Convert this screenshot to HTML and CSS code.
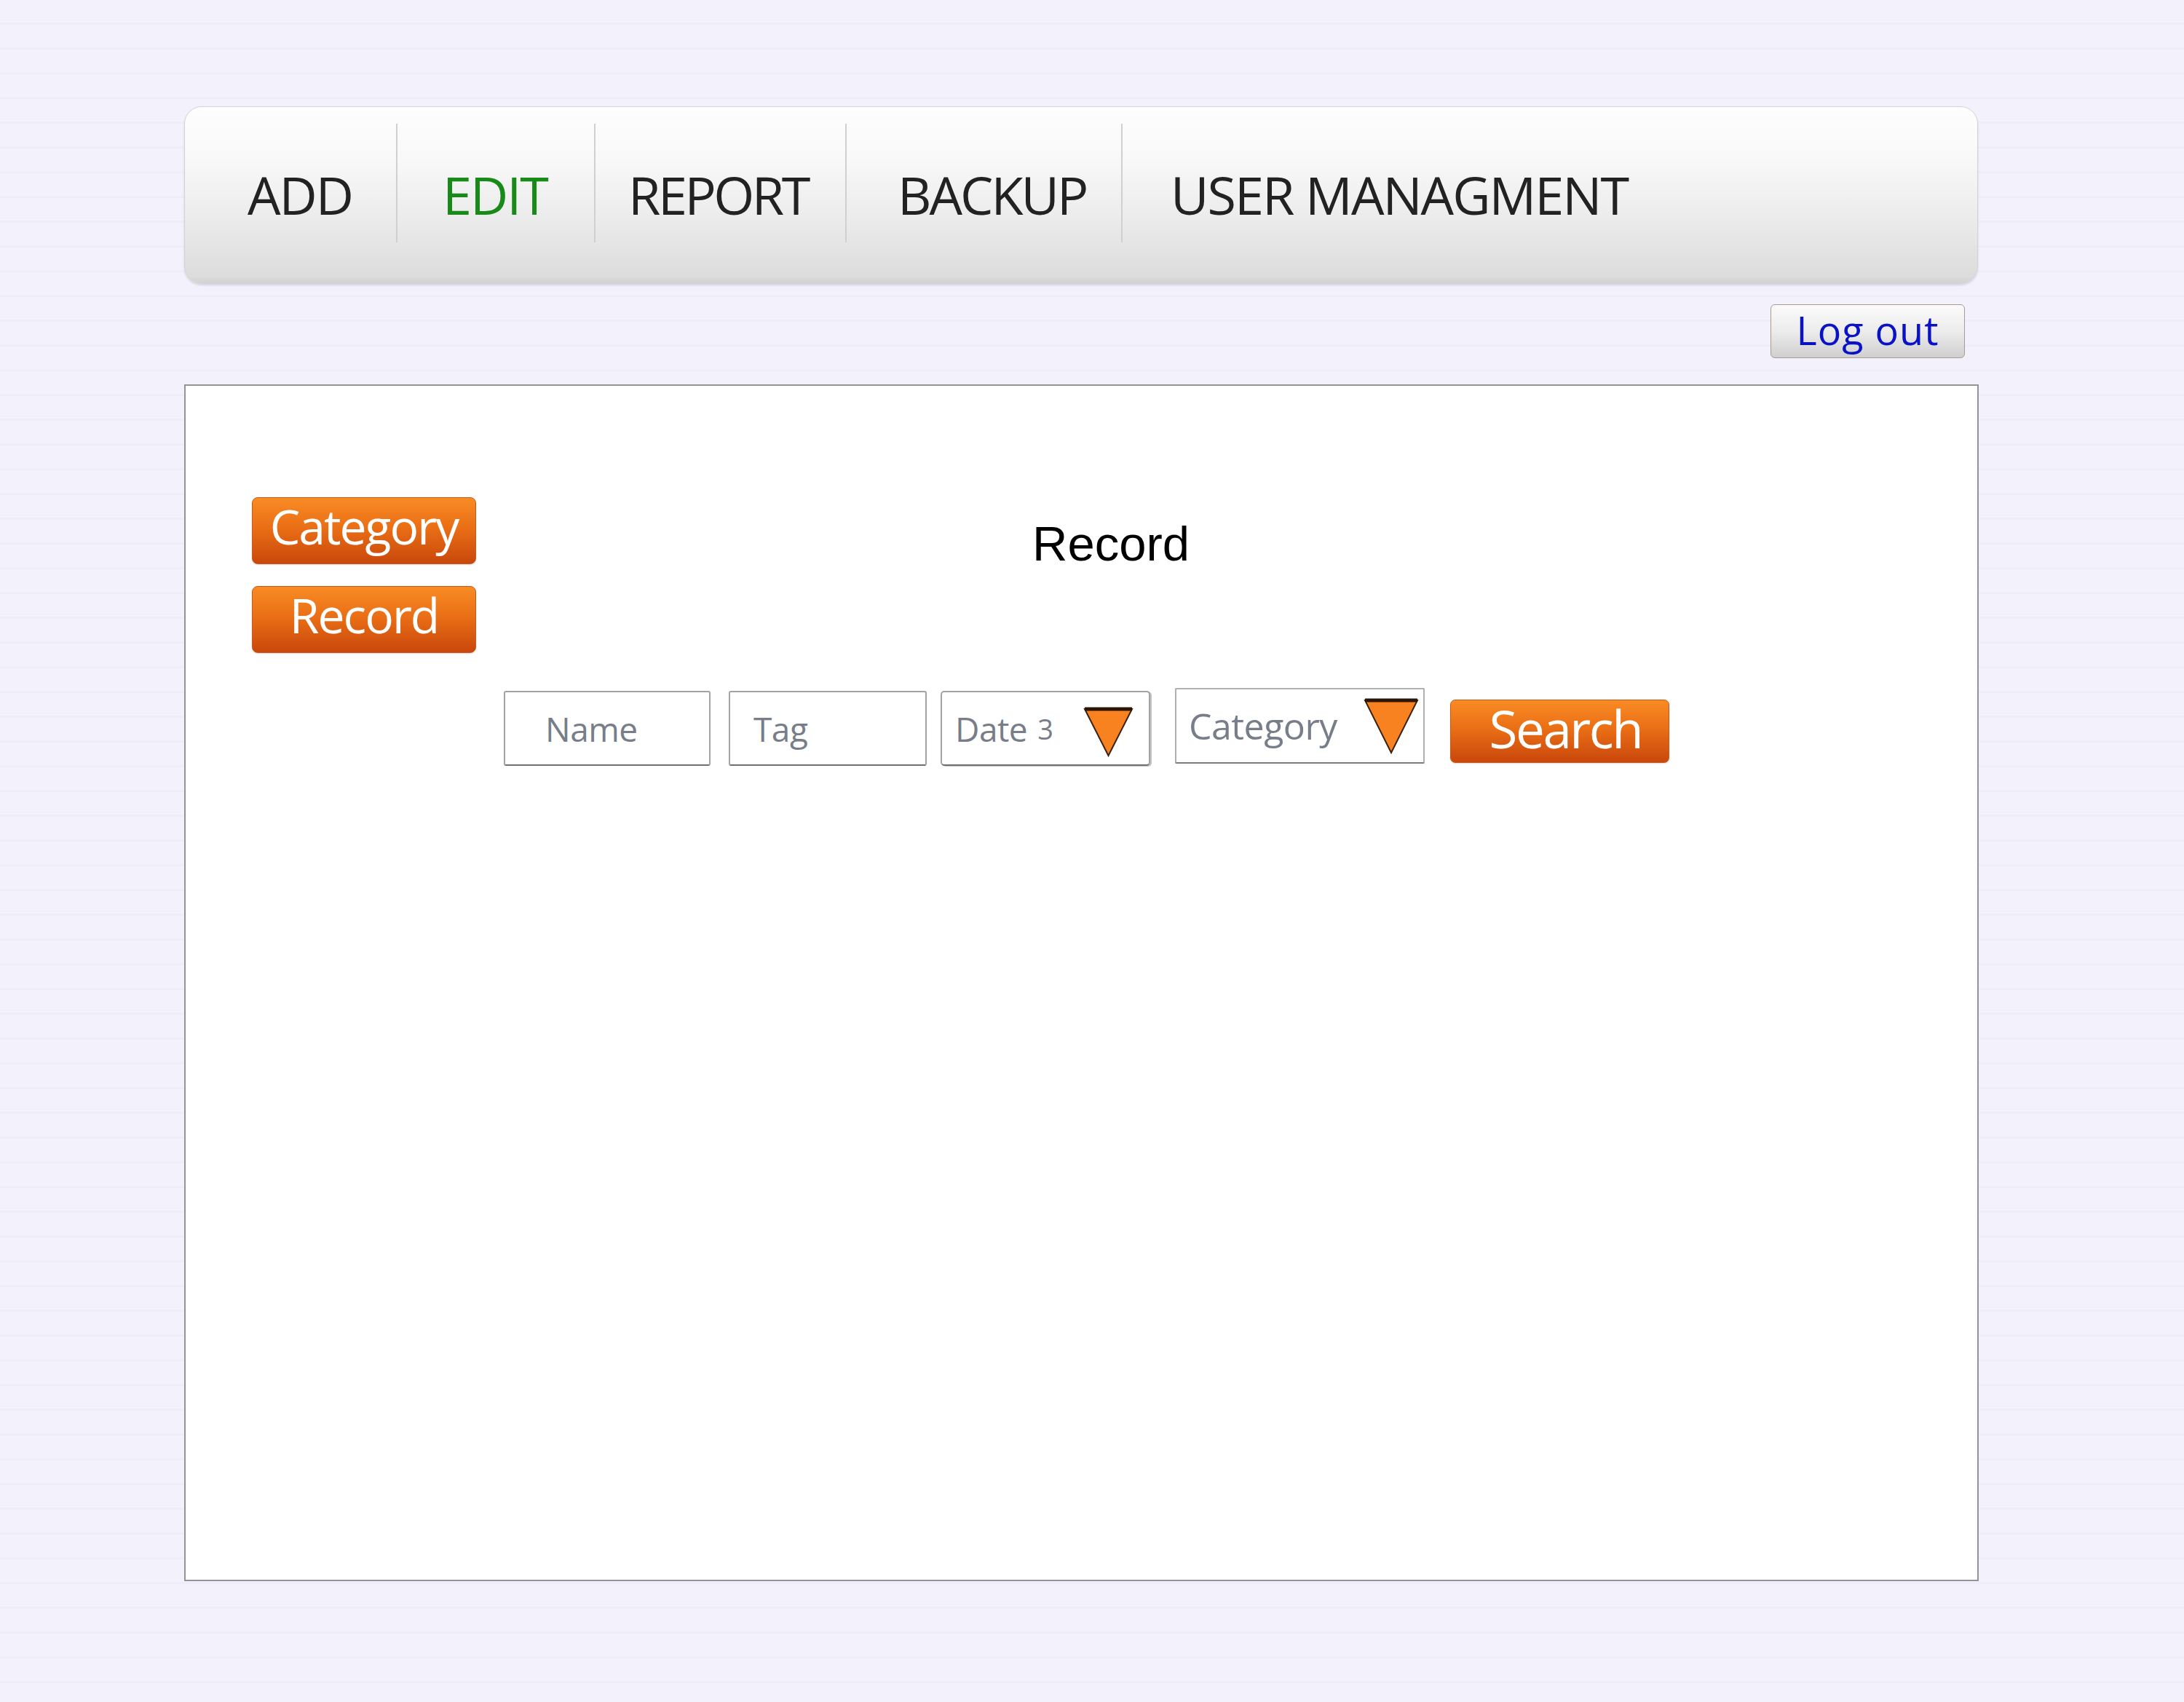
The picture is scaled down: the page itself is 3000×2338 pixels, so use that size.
FILE: index.html
```html
<!DOCTYPE html>
<html lang="en">
<head>
<meta charset="utf-8">
<title>Record</title>
<link rel="stylesheet" href="styles.css">
</head>
<body>
<div class="page">
  <nav class="nav">
    <a class="nav-item nav-add">ADD</a>
    <a class="nav-item nav-edit active">EDIT</a>
    <a class="nav-item nav-report">REPORT</a>
    <a class="nav-item nav-backup">BACKUP</a>
    <a class="nav-item nav-user">USER MANAGMENT</a>
  </nav>

  <div class="logout-row">
    <button class="logout">Log out</button>
  </div>

  <main class="panel">
    <div class="top-row">
      <div class="side-buttons">
        <button class="orange-btn side-btn">Category</button>
        <button class="orange-btn side-btn">Record</button>
      </div>
      <h1 class="title">Record</h1>
    </div>

    <div class="filters">
      <div class="field field-name">Name</div>
      <div class="field field-tag">Tag</div>
      <div class="field field-date">
        <span>Date</span><span class="date-num">3</span>
        <svg class="tri tri-date" width="70" height="70" viewBox="0 0 70 70">
          <polygon points="2,4 67,4 34.5,68" fill="#f7821f" stroke="#3b2210" stroke-width="2" stroke-linejoin="miter"/>
          <line x1="2" y1="4" x2="67" y2="4" stroke="#2a1606" stroke-width="5"/>
        </svg>
      </div>
      <div class="field field-category">
        <span>Category</span>
        <svg class="tri tri-cat" width="76" height="78" viewBox="0 0 76 78">
          <polygon points="2,4 74,4 38,76" fill="#f7821f" stroke="#3b2210" stroke-width="2"/>
          <line x1="2" y1="4" x2="74" y2="4" stroke="#2a1606" stroke-width="5"/>
        </svg>
      </div>
      <button class="orange-btn search-btn">Search</button>
    </div>
  </main>
</div>
</body>
</html>
```

FILE: styles.css
```css
* { box-sizing: border-box; }

html, body {
  margin: 0;
  padding: 0;
}

body {
  width: 3000px;
  min-height: 2338px;
  background-color: #f2f1fc;
  background-image: repeating-linear-gradient(to bottom,
    rgba(255,255,255,0) 0px,
    rgba(255,255,255,0) 31px,
    rgba(224,222,244,0.2) 31px,
    rgba(224,222,244,0.2) 34px);
  font-family: "Open Sans", "Liberation Sans", sans-serif;
}

.page {
  padding: 146px 0 0 253px;
  width: 2718px;
}

/* ---------- navigation ---------- */
.nav {
  display: flex;
  height: 244px;
  width: 2464px;
  padding-top: 23px;
  border: 1px solid #d4d4d6;
  border-radius: 24px;
  background: linear-gradient(to bottom, #fefefe 0%, #f8f8f8 30%, #ececec 62%, #dcdcdc 96%, #d2d2d2 100%);
  box-shadow: 0 2px 3px rgba(0,0,0,0.12);
}

.nav-item {
  height: 163px;
  padding-top: 61px;
  font-size: 72px;
  line-height: 1;
  letter-spacing: -2px;
  color: #222222;
  white-space: nowrap;
}

.nav-item + .nav-item {
  border-left: 2px solid #d0d0d0;
}

.nav-add { width: 290px; padding-left: 86px; }
.nav-edit { width: 272px; padding-left: 62px; }
.nav-report { width: 345px; padding-left: 45px; letter-spacing: -3.5px; }
.nav-backup { width: 379px; padding-left: 70px; letter-spacing: -3px; }
.nav-user { padding-left: 66px; }

.nav-item.active { color: #178a17; }

/* ---------- logout ---------- */
.logout-row {
  display: flex;
  justify-content: flex-end;
  width: 2465px;
  padding: 28px 19px 0 0;
}

.logout {
  width: 267px;
  height: 74px;
  padding: 0 0 4px 0;
  border: 1px solid #a99a92;
  border-radius: 6px;
  background: linear-gradient(to bottom, #fbfbfb 0%, #ececec 50%, #cfcfcf 100%);
  font-family: "Open Sans", "Liberation Sans", sans-serif;
  font-size: 54px;
  line-height: 1;
  letter-spacing: 1px;
  color: #0a12c6;
}

/* ---------- panel ---------- */
.panel {
  margin-top: 36px;
  width: 2465px;
  height: 1644px;
  padding: 153px 0 0 91px;
  background: #ffffff;
  border: 2px solid #949494;
}

.top-row {
  display: flex;
  align-items: flex-start;
}

.side-buttons {
  display: flex;
  flex-direction: column;
  gap: 30px;
  width: 308px;
}

.orange-btn {
  display: flex;
  align-items: center;
  justify-content: center;
  border: 1px solid #c45a1c;
  border-radius: 8px;
  background: linear-gradient(to bottom, #f98b24 0%, #ea6f16 45%, #c9470b 100%);
  color: #ffffff;
  font-family: "Open Sans", "Liberation Sans", sans-serif;
  line-height: 1;
  box-shadow: 0 1px 2px rgba(0,0,0,0.15);
}

.side-btn {
  width: 308px;
  height: 92px;
  padding: 0 0 14px 0;
  font-size: 66px;
  letter-spacing: -2px;
}

.title {
  margin: 30px 0 0 764px;
  font-family: "Liberation Sans", Arial, sans-serif;
  font-weight: normal;
  font-size: 67px;
  line-height: 1;
  color: #000000;
}

/* ---------- filters ---------- */
.filters {
  display: flex;
  align-items: flex-start;
  margin: 48px 0 0 346px;
}

.field {
  display: flex;
  align-items: center;
  height: 103px;
  margin-top: 4px;
  border: 2px solid #a3a3a3;
  border-bottom-color: #6f6f6f;
  border-radius: 3px;
  background: #ffffff;
  font-size: 46px;
  line-height: 1;
  color: #777e8a;
  letter-spacing: -0.5px;
}

.field-name { width: 284px; padding-left: 55px; }
.field-tag { width: 272px; padding-left: 32px; margin-left: 25px; }

.field-date {
  width: 288px;
  padding-left: 18px;
  margin-left: 19px;
  border-radius: 5px;
  box-shadow: 2px 1px 0 #c4c4c4;
}

.date-num {
  margin-left: 14px;
  font-size: 38px;
}

.tri-date {
  margin: 8px 20px 0 auto;
}

.field-category {
  width: 343px;
  height: 104px;
  margin-top: 0;
  margin-left: 34px;
  padding-left: 17px;
  font-size: 50px;
  border-color: #b0b0b0;
  border-bottom-color: #7a7a7a;
  border-radius: 2px;
}

.tri-cat {
  margin: 0 6px 0 auto;
}

.search-btn {
  width: 301px;
  height: 87px;
  margin: 16px 0 0 35px;
  padding: 0 0 8px 16px;
  border-radius: 7px;
  font-size: 71px;
  letter-spacing: -2.5px;
}
```
